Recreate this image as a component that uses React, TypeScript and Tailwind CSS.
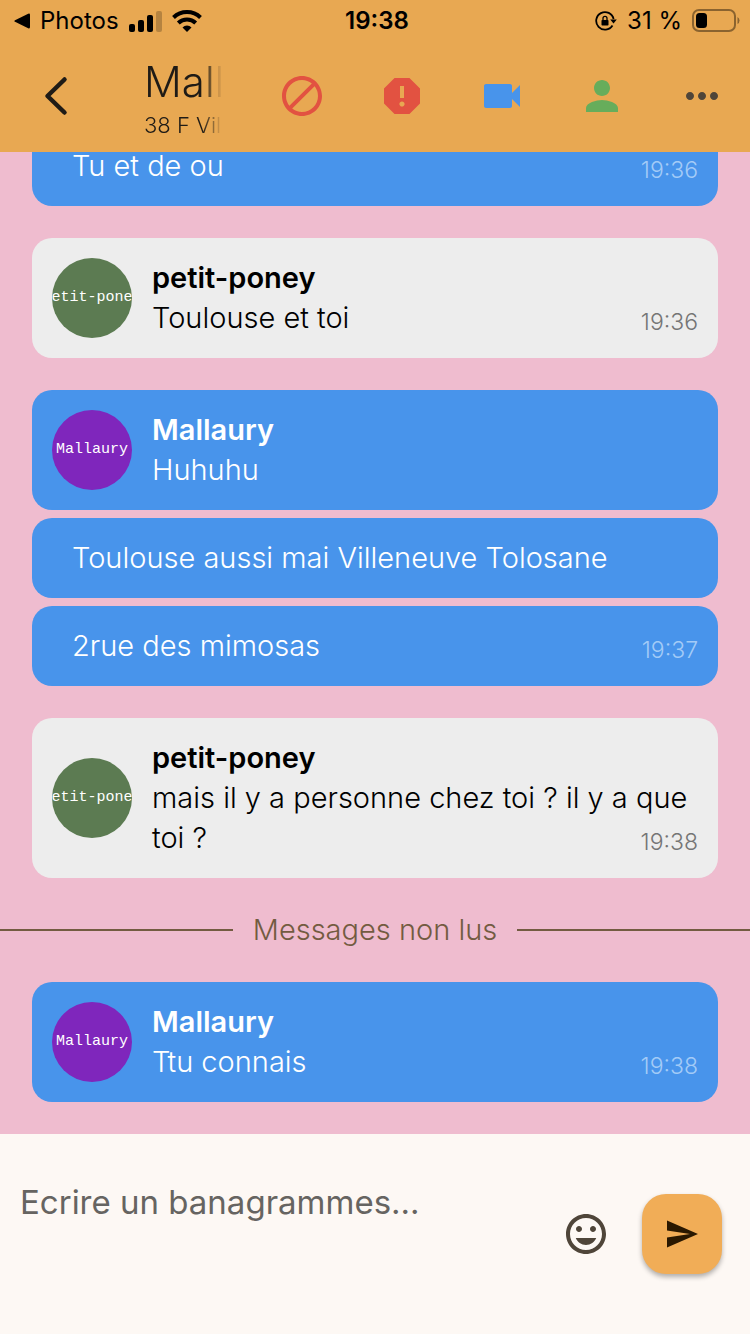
import React, { useState } from 'react';
import {
  MdBlock,
  MdInsertEmoticon,
  MdMoreHoriz,
  MdPerson,
  MdReport,
  MdVideocam,
} from 'react-icons/md';

type Message = {
  text: string;
  time?: string;
};

type MessageGroup = {
  author: string;
  mine: boolean;
  continued?: boolean;
  messages: Message[];
};

const readGroups: MessageGroup[] = [
  {
    author: 'Mallaury',
    mine: false,
    continued: true,
    messages: [{ text: 'Tu et de ou', time: '19:36' }],
  },
  {
    author: 'petit-poney',
    mine: true,
    messages: [{ text: 'Toulouse et toi', time: '19:36' }],
  },
  {
    author: 'Mallaury',
    mine: false,
    messages: [
      { text: 'Huhuhu' },
      { text: 'Toulouse aussi mai Villeneuve Tolosane' },
      { text: '2rue des mimosas', time: '19:37' },
    ],
  },
  {
    author: 'petit-poney',
    mine: true,
    messages: [{ text: 'mais il y a personne chez toi ? il y a que toi ?', time: '19:38' }],
  },
];

const unreadGroups: MessageGroup[] = [
  {
    author: 'Mallaury',
    mine: false,
    messages: [{ text: 'Ttu connais', time: '19:38' }],
  },
];

const StatusBar = () => (
  <div className="grid h-10 grid-cols-3 items-center pl-3.5 pr-2.5 pt-0.5 text-2xl leading-8 text-black">
    <div className="flex items-center gap-2.5">
      <svg className="h-4 w-4" viewBox="0 0 16 16" fill="currentColor">
        <path d="M1 7.2 14.2.8Q16 0 16 2v12q0 2-1.8 1.2L1 8.8Q-.4 8 1 7.2z" />
      </svg>
      <span>Photos</span>
      <svg className="h-[21px] w-[33px]" viewBox="0 0 33 21" fill="currentColor">
        <rect x="0" y="13" width="6" height="8" rx="2" />
        <rect x="9" y="9" width="6" height="12" rx="2" />
        <rect x="18" y="4" width="6" height="17" rx="2" />
        <rect x="27" y="0" width="6" height="21" rx="2" opacity="0.22" />
      </svg>
      <svg className="h-[22px] w-[30px]" viewBox="0 0 30 22" fill="none" stroke="currentColor">
        <path d="M1.5 7.5a19.5 19.5 0 0 1 27 0" strokeWidth="4" />
        <path d="M6.3 13a12.5 12.5 0 0 1 17.4 0" strokeWidth="4" />
        <path d="M15 22l-4.5-4.6a6.5 6.5 0 0 1 9 0z" fill="currentColor" stroke="none" />
      </svg>
    </div>
    <div className="text-center font-semibold">19:38</div>
    <div className="flex items-center justify-end gap-2.5">
      <svg className="h-[22px] w-[22px]" viewBox="0 0 22 22" fill="none" stroke="currentColor">
        <path d="M17.5 15.5A8.8 8.8 0 1 1 18.6 9" strokeWidth="1.8" />
        <path d="M15.2 9.5h6.6l-3.3 4z" fill="currentColor" stroke="none" />
        <rect x="6.5" y="10" width="7" height="5.5" rx="0.8" fill="currentColor" stroke="none" />
        <path d="M8 10V8.3a2 2 0 0 1 4 0V10" strokeWidth="1.3" />
      </svg>
      <span className="whitespace-nowrap">31 %</span>
      <svg className="h-6 w-12" viewBox="0 0 48 24">
        <rect x="1" y="1" width="42" height="21" rx="6" fill="none" stroke="#8a632f" strokeWidth="2" />
        <rect x="4" y="4" width="11" height="15" rx="3.5" fill="#000" />
        <path d="M45.5 8q2 1 2 3.5t-2 3.5z" fill="#8a632f" />
      </svg>
    </div>
  </div>
);

const Header = () => (
  <header className="shrink-0 bg-[#e8a852]">
    <StatusBar />
    <div className="flex h-28 items-center">
      <button type="button" aria-label="Retour" className="flex h-24 w-28 shrink-0 items-center justify-center">
        <svg className="h-10 w-6" viewBox="0 0 24 40" fill="none" stroke="#1f1b16" strokeWidth="4.5" strokeLinecap="round" strokeLinejoin="round">
          <path d="M20.5 3.5 3.5 20l17 16.500" />
        </svg>
      </button>
      <div className="mx-8 min-w-0 flex-1 overflow-hidden whitespace-nowrap pt-2 text-[#1f1b16] [mask-image:linear-gradient(to_right,black_75%,transparent)]">
        <h1 className="text-[42px] font-light leading-[50px]">Mallaury</h1>
        <p className="text-[22px] font-light leading-9">38 F Villeneuve-Tolosane</p>
      </div>
      <nav className="flex shrink-0 gap-1">
        <button type="button" aria-label="Bloquer" className="flex h-24 w-24 items-center justify-center text-[#e25241]">
          <MdBlock className="h-12 w-12" />
        </button>
        <button type="button" aria-label="Signaler" className="flex h-24 w-24 items-center justify-center text-[#e25241]">
          <MdReport className="h-12 w-12" />
        </button>
        <button type="button" aria-label="Appel vidéo" className="flex h-24 w-24 items-center justify-center text-[#4894eb]">
          <MdVideocam className="h-12 w-12" />
        </button>
        <button type="button" aria-label="Profil" className="flex h-24 w-24 items-center justify-center text-[#67ad5b]">
          <MdPerson className="h-12 w-12" />
        </button>
        <button type="button" aria-label="Plus" className="flex h-24 w-24 items-center justify-center text-[#4f4539]">
          <MdMoreHoriz className="h-12 w-12" />
        </button>
      </nav>
    </div>
  </header>
);

const Avatar = ({ name, mine }: { name: string; mine: boolean }) => (
  <div
    className={`flex h-20 w-20 shrink-0 items-center justify-center overflow-hidden rounded-full font-['Liberation_Mono','DejaVu_Sans_Mono',monospace] text-[15px] leading-5 text-white ${
      mine ? 'bg-[#5c7b52]' : 'bg-[#7f26bc]'
    }`}
  >
    <span className="whitespace-nowrap">{name}</span>
  </div>
);

const Bubble = ({ group, message, first }: { group: MessageGroup; message: Message; first: boolean }) => (
  <article
    className={`relative flex items-center gap-5 rounded-[20px] p-5 ${
      group.mine ? 'bg-[#ededed] text-black' : 'bg-[#4894eb] text-white'
    }`}
  >
    {first && <Avatar name={group.author} mine={group.mine} />}
    <div className={`min-w-0 flex-1 text-[29px] leading-10 ${first ? '' : 'pl-5'}`}>
      {first && <h2 className="font-semibold">{group.author}</h2>}
      <p className="font-light">{message.text}</p>
    </div>
    {message.time && (
      <time
        className={`absolute bottom-5 right-5 text-[23px] font-light leading-8 ${
          group.mine ? 'text-[#757575]' : 'text-[#a3cbf7]'
        }`}
      >
        {message.time}
      </time>
    )}
  </article>
);

const Group = ({ group }: { group: MessageGroup }) => (
  <section className="flex flex-col gap-2 px-8">
    {group.messages.map((message, index) => (
      <Bubble
        key={index}
        group={group}
        message={message}
        first={index === 0 && !group.continued}
      />
    ))}
  </section>
);

const Composer = () => {
  const [draft, setDraft] = useState('');

  return (
    <form
      className="flex shrink-0 items-center bg-[#fdf8f4] py-10 pl-5 pr-7"
      onSubmit={(e) => {
        e.preventDefault();
        setDraft('');
      }}
    >
      <textarea
        aria-label="Message"
        value={draft}
        onChange={(e) => setDraft(e.target.value)}
        placeholder="Ecrire un banagrammes..."
        className="h-30 min-w-0 flex-1 resize-none bg-transparent pt-2 text-[33px] leading-10 text-[#1f1b16] outline-none placeholder:text-[#666461]"
      />
      <button type="button" aria-label="Emojis" className="mr-4 flex h-20 w-20 items-center justify-center text-[#4f4539]">
        <MdInsertEmoticon className="h-12 w-12" />
      </button>
      <button
        type="submit"
        aria-label="Envoyer"
        className="flex h-20 w-20 items-center justify-center rounded-3xl bg-[#f1ad57] text-[#2a1800] shadow-[0_3px_5px_rgba(0,0,0,0.3)]"
      >
        <svg className="h-7 w-8" viewBox="0 0 32 28" fill="currentColor">
          <path d="M1 .5 32 14 1 27.5V17.5L24 14 1 10.5z" />
        </svg>
      </button>
    </form>
  );
};

const App = () => {
  return (
    <div className="flex h-screen flex-col font-[Inter,'Liberation_Sans',sans-serif]">
      <Header />

      <main className="flex min-h-0 flex-1 flex-col justify-end gap-8 overflow-hidden bg-[#efbccf] pb-8">
        {readGroups.map((group, index) => (
          <Group key={index} group={group} />
        ))}

        <div className="flex items-center gap-5 text-[29px] font-light leading-10 text-[#735b41]">
          <span className="h-0.5 flex-1 bg-[#735b41]" />
          <span>Messages non lus</span>
          <span className="h-0.5 flex-1 bg-[#735b41]" />
        </div>

        {unreadGroups.map((group, index) => (
          <Group key={index} group={group} />
        ))}
      </main>

      <Composer />
    </div>
  );
};

export default App;
